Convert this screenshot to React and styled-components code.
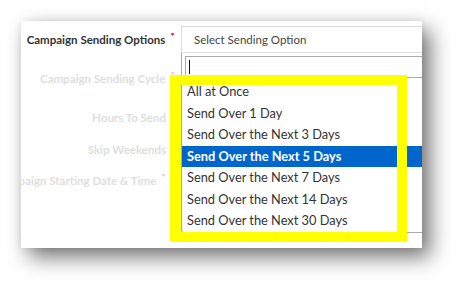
import styled, { createGlobalStyle } from 'styled-components';

const GlobalStyle = createGlobalStyle`
  html, body {
    margin: 0;
    padding: 0;
    background: #fff;
  }
  body {
    font-family: Lato, "Open Sans", Arial, sans-serif;
  }
`;

const Stage = styled.div`
  width: 464px;
  height: 290px;
  padding: 21px 0 0 21px;
  box-sizing: border-box;
  overflow: hidden;
  background: #fff;
`;

const Card = styled.div`
  position: relative;
  width: 401px;
  height: 227px;
  background: #fff;
  overflow: hidden;
  box-shadow: 8px 9px 20px rgba(0, 0, 0, 0.55), 0 0 8px rgba(0, 0, 0, 0.08);
`;

const Form = styled.div`
  display: flex;
  flex-direction: column;
  padding-top: 5px;
  width: 520px;
`;

const Row = styled.div`
  display: flex;
  align-items: center;
  height: ${(p) => p.$h}px;
`;

const Label = styled.div`
  width: 160px;
  flex: none;
  display: flex;
  justify-content: flex-end;
  align-items: center;
  padding-right: ${(p) => p.$pad || 6}px;
  box-sizing: border-box;
  white-space: nowrap;
  overflow: hidden;
  font-size: 11.5px;
  font-weight: 700;
  color: ${(p) => (p.$faded ? '#dedede' : '#333')};
`;

const LabelText = styled.span`
  flex: none;
`;

const Required = styled.span`
  flex: none;
  color: ${(p) => (p.$faded ? '#f0c8c8' : '#e02020')};
  font-size: 11px;
  margin-left: 5px;
  position: relative;
  top: -3px;
`;

const SelectBox = styled.div`
  flex: none;
  width: 320px;
  height: 27px;
  box-sizing: border-box;
  border: 1px solid #dcdcdc;
  display: flex;
  align-items: center;
  padding-left: 12px;
  font-size: 11.5px;
  color: #444;
`;

const Dropdown = styled.div`
  position: absolute;
  left: 160px;
  top: 32px;
  width: 320px;
  height: 180px;
  box-sizing: border-box;
  border: 1px solid #aaa;
  border-top: none;
  border-radius: 0 0 3px 3px;
  background: #fff;
  display: flex;
  flex-direction: column;
`;

const SearchBox = styled.div`
  margin: 3px 3px 0 3px;
  height: 22px;
  box-sizing: border-box;
  border: 1px solid #aaa;
  display: flex;
  align-items: center;
  padding-left: 3px;
`;

const Caret = styled.span`
  width: 1px;
  height: 14px;
  background: #111;
`;

const OptionList = styled.ul`
  list-style: none;
  margin: 3px 0 0;
  padding: 0;
`;

const Option = styled.li`
  height: 21.5px;
  line-height: 21.5px;
  padding-left: 5px;
  font-size: 12.8px;
  white-space: nowrap;
  background: ${(p) => (p.$active ? '#0066cc' : 'transparent')};
  color: ${(p) => (p.$active ? '#fff' : '#333')};
  font-weight: ${(p) => (p.$active ? 700 : 400)};
`;

const Highlight = styled.div`
  position: absolute;
  left: 149px;
  top: 54px;
  width: 237px;
  height: 167px;
  box-sizing: border-box;
  border: 10px solid #ffff00;
  border-left-width: 11px;
  pointer-events: none;
`;

const options = [
  'All at Once',
  'Send Over 1 Day',
  'Send Over the Next 3 Days',
  'Send Over the Next 5 Days',
  'Send Over the Next 7 Days',
  'Send Over the Next 14 Days',
  'Send Over the Next 30 Days',
];

const fields = [
  { label: 'Campaign Sending Options', required: true, h: 27 },
  { label: 'Campaign Sending Cycle', required: true, faded: true, h: 51 },
  { label: 'Hours To Send', faded: true, h: 27, pad: 15 },
  { label: 'Skip Weekends', faded: true, h: 37, pad: 15 },
  { label: 'Campaign Starting Date & Time', required: true, faded: true, h: 25, pad: 15 },
];

const App = () => {
  return (
    <>
      <GlobalStyle />
      <Stage>
        <Card>
          <Form>
            {fields.map((f, i) => (
              <Row key={f.label} $h={f.h}>
                <Label $faded={f.faded} $pad={f.pad}>
                  <LabelText>{f.label}</LabelText>
                  {f.required && <Required $faded={f.faded}>*</Required>}
                </Label>
                {i === 0 && <SelectBox>Select Sending Option</SelectBox>}
              </Row>
            ))}
          </Form>
          <Dropdown>
            <SearchBox>
              <Caret />
            </SearchBox>
            <OptionList>
              {options.map((o) => (
                <Option key={o} $active={o === 'Send Over the Next 5 Days'}>
                  {o}
                </Option>
              ))}
            </OptionList>
          </Dropdown>
          <Highlight />
        </Card>
      </Stage>
    </>
  );
};

export default App;
